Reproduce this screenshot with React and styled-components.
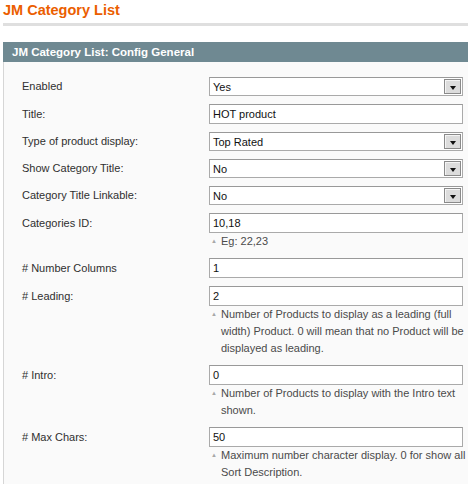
import React from 'react';
import styled, { createGlobalStyle } from 'styled-components';

const GlobalStyle = createGlobalStyle`
  html, body {
    margin: 0;
    padding: 0;
    background: #fff;
    font-family: "Liberation Sans", Arial, sans-serif;
  }
`;

const Page = styled.div`
  width: 468px;
  height: 484px;
  overflow: hidden;
  padding-left: 3px;
  box-sizing: border-box;
`;

const PageTitle = styled.h3`
  margin: 0;
  height: 23px;
  padding-top: 2px;
  box-sizing: border-box;
  color: #eb5e00;
  font-size: 14.5px;
  font-weight: bold;
  line-height: 17px;
`;

const Rule = styled.div`
  height: 3px;
  background: #dfdfdf;
  margin-bottom: 16px;
`;

const SectionHead = styled.div`
  height: 20px;
  background: #6f8992;
  color: #fff;
  font-size: 11.5px;
  font-weight: bold;
  line-height: 20px;
  padding-left: 9px;
`;

const Fieldset = styled.div`
  background: #fafafa;
  border-left: 1px solid #d6d6d6;
  padding: 11px 0 20px 18px;
  height: 500px;
`;

const Row = styled.div`
  display: flex;
  padding: 4px 0;
`;

const Label = styled.div`
  width: 187px;
  flex: none;
  font-size: 11px;
  color: #2f2f2f;
  line-height: ${p => (p.$tall ? '20px' : '19px')};
`;

const Value = styled.div`
  width: 264px;
  flex: none;
`;

const TextInput = styled.div`
  width: 254px;
  height: 20px;
  box-sizing: border-box;
  border: 1px solid #aaa;
  border-top-color: #999;
  background: #fff;
  font-size: 11px;
  line-height: 18px;
  padding-left: 3px;
  color: #111;
`;

const SelectBox = styled.div`
  width: 254px;
  height: 19px;
  box-sizing: border-box;
  border: 1px solid #aaa;
  border-top-color: #999;
  background: #fff;
  display: flex;
  align-items: center;
  justify-content: space-between;
  font-size: 11px;
  color: #111;
  padding-left: 3px;
  padding-right: 1px;
`;

const ArrowButton = styled.span`
  width: 17px;
  height: 15px;
  box-sizing: border-box;
  border: 1px solid #8a8a8a;
  background: #dcdcdc;
  box-shadow: inset 1px 1px 0 #f4f4f4;
  display: flex;
  align-items: center;
  justify-content: center;
  padding-top: 2px;

  &::after {
    content: '';
    width: 0;
    height: 0;
    border-left: 3.5px solid transparent;
    border-right: 3.5px solid transparent;
    border-top: 4px solid #111;
  }
`;

const Note = styled.div`
  display: flex;
  font-size: 11px;
  line-height: 17px;
  color: #4a4a4a;
  padding-left: 2px;
`;

const NoteMark = styled.span`
  flex: none;
  width: 10px;
  font-size: 6px;
  color: #a8a8a8;
  line-height: 17px;
`;

const fields = [
  { label: 'Enabled', type: 'select', value: 'Yes' },
  { label: 'Title:', type: 'text', value: 'HOT product' },
  { label: 'Type of product display:', type: 'select', value: 'Top Rated' },
  { label: 'Show Category Title:', type: 'select', value: 'No' },
  { label: 'Category Title Linkable:', type: 'select', value: 'No' },
  { label: 'Categories ID:', type: 'text', value: '10,18', note: 'Eg: 22,23' },
  { label: '# Number Columns', type: 'text', value: '1' },
  {
    label: '# Leading:',
    type: 'text',
    value: '2',
    note: 'Number of Products to display as a leading (full width) Product. 0 will mean that no Product will be displayed as leading.',
  },
  {
    label: '# Intro:',
    type: 'text',
    value: '0',
    note: 'Number of Products to display with the Intro text shown.',
  },
  {
    label: '# Max Chars:',
    type: 'text',
    value: '50',
    note: 'Maximum number character display. 0 for show all Sort Description.',
  },
];

const App = () => (
  <Page>
    <GlobalStyle />
    <PageTitle>JM Category List</PageTitle>
    <Rule />
    <SectionHead>JM Category List: Config General</SectionHead>
    <Fieldset>
      {fields.map(f => (
        <Row key={f.label}>
          <Label $tall={f.type === 'text'}>{f.label}</Label>
          <Value>
            {f.type === 'select' ? (
              <SelectBox>
                {f.value}
                <ArrowButton />
              </SelectBox>
            ) : (
              <TextInput>{f.value}</TextInput>
            )}
            {f.note && (
              <Note>
                <NoteMark>▲</NoteMark>
                <span>{f.note}</span>
              </Note>
            )}
          </Value>
        </Row>
      ))}
    </Fieldset>
  </Page>
);

export default App;
